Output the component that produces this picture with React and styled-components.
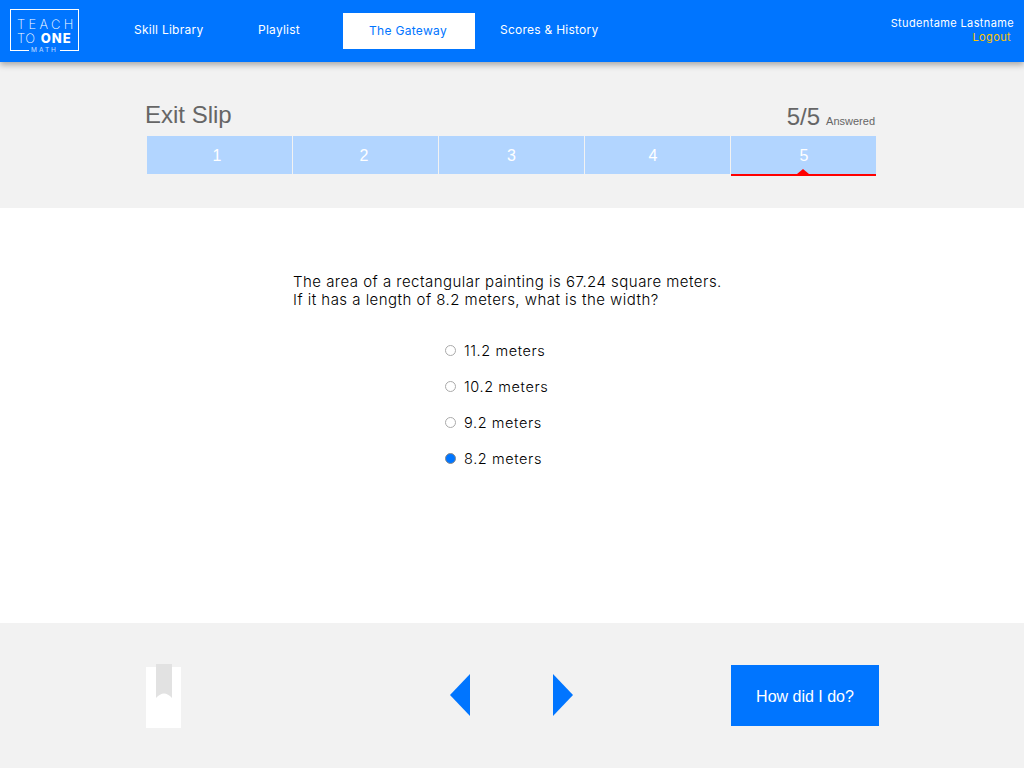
import React from 'react'
import styled, { createGlobalStyle } from 'styled-components'

const questions = [
  { label: '1', nudge: 5 },
  { label: '2', nudge: 3 },
  { label: '3', nudge: 0 },
  { label: '4', nudge: 9 },
  { label: '5', nudge: 0, active: true },
]

const answers = [
  { label: '11.2 meters' },
  { label: '10.2 meters' },
  { label: '9.2 meters' },
  { label: '8.2 meters', selected: true },
]

function App() {
  return (
    <Page>
      <GlobalStyle />
      <Header>
        <Logo>
          <LogoLine>TEACH</LogoLine>
          <LogoRow>
            <span>TO</span>
            <LogoBold>ONE</LogoBold>
          </LogoRow>
          <LogoMath>MATH</LogoMath>
        </Logo>
        <Nav>
          <NavItem $width={124}>Skill Library</NavItem>
          <NavItem $width={85}>Playlist</NavItem>
          <NavItem $width={132} $active>The Gateway</NavItem>
          <NavItem $width={148}>Scores &amp; History</NavItem>
        </Nav>
        <User>
          <UserName>Studentame Lastname</UserName>
          <Logout>Logout</Logout>
        </User>
      </Header>

      <SlipBar>
        <SlipHead>
          <SlipTitle>Exit Slip</SlipTitle>
          <Progress>
            <ProgressCount>5/5</ProgressCount>
            <ProgressLabel>Answered</ProgressLabel>
          </Progress>
        </SlipHead>
        <Tabs>
          {questions.map((q) => (
            <Tab key={q.label} $active={q.active} $nudge={q.nudge}>
              {q.label}
            </Tab>
          ))}
        </Tabs>
      </SlipBar>

      <Main>
        <Question>
          The area of a rectangular painting is 67.24 square meters.
          <br />
          If it has a length of 8.2 meters, what is the width?
        </Question>
        <Answers>
          {answers.map((a) => (
            <Answer key={a.label}>
              <Radio $selected={a.selected} />
              {a.label}
            </Answer>
          ))}
        </Answers>
      </Main>

      <Footer>
        <Bookmark />
        <Arrows>
          <svg width="20" height="42" viewBox="0 0 20 42">
            <polygon points="20,0 0,21 20,42" fill="#0075ff" />
          </svg>
          <svg width="20" height="42" viewBox="0 0 20 42">
            <polygon points="0,0 20,21 0,42" fill="#0075ff" />
          </svg>
        </Arrows>
        <DoneButton>How did I do?</DoneButton>
      </Footer>
    </Page>
  )
}

const GlobalStyle = createGlobalStyle`
  html, body {
    margin: 0;
    padding: 0;
    background: #f2f2f2;
  }
`

const Page = styled.div`
  width: 1024px;
  height: 768px;
  overflow: hidden;
  display: flex;
  flex-direction: column;
  font-family: "Liberation Sans", Arial, sans-serif;
`

const Header = styled.header`
  height: 62px;
  flex-shrink: 0;
  display: flex;
  align-items: center;
  padding: 0 10px;
  background-color: #0075ff;
  color: #fff;
  box-shadow: 0 3px 6px rgba(0, 0, 0, 0.3);
  position: relative;
  font-family: "Inter", sans-serif;
`

const Logo = styled.div`
  width: 69px;
  height: 42px;
  box-sizing: border-box;
  border: 1px solid #fff;
  border-bottom: none;
  padding: 7px 0 0 6px;
  margin-top: -2px;
  position: relative;
  flex-shrink: 0;

  &::before,
  &::after {
    content: "";
    position: absolute;
    bottom: 0;
    width: 18px;
    height: 1px;
    background: #fff;
  }
  &::before { left: 0; }
  &::after { right: 0; }
`

const LogoLine = styled.div`
  font-size: 13px;
  font-weight: 200;
  line-height: 14px;
  letter-spacing: 3.3px;
`

const LogoRow = styled.div`
  display: flex;
  gap: 5px;
  font-size: 13px;
  font-weight: 200;
  line-height: 14px;
  letter-spacing: 0.6px;
`

const LogoBold = styled.span`
  font-weight: 800;
  letter-spacing: 1px;
`

const LogoMath = styled.div`
  position: absolute;
  left: 0;
  right: 0;
  bottom: -3px;
  text-align: center;
  font-size: 6.5px;
  line-height: 7px;
  letter-spacing: 2px;
  opacity: 0.75;
`

const Nav = styled.nav`
  display: flex;
  align-items: center;
  margin-left: 55px;
`

const NavItem = styled.a`
  width: ${(p) => p.$width}px;
  height: 36px;
  box-sizing: border-box;
  display: flex;
  align-items: center;
  justify-content: ${(p) => (p.$active ? 'center' : 'flex-start')};
  padding-bottom: ${(p) => (p.$active ? '2px' : '4px')};
  padding-right: ${(p) => (p.$active ? '2px' : '0')};
  font-size: 12px;
  letter-spacing: ${(p) => (p.$active ? '0.32px' : '0.25px')};
  background-color: ${(p) => (p.$active ? '#fff' : 'transparent')};
  color: ${(p) => (p.$active ? '#0075ff' : '#fff')};
  margin-right: ${(p) => (p.$active ? '25px' : '0')};
`

const User = styled.div`
  margin-left: auto;
  text-align: right;
  font-size: 11px;
  line-height: 14px;
  letter-spacing: 0.37px;
  margin-top: -2px;
`

const UserName = styled.div``

const Logout = styled.div`
  color: #ffc400;
  margin-right: 3px;
`

const SlipBar = styled.section`
  height: 146px;
  flex-shrink: 0;
  box-sizing: border-box;
  padding: 37px 148px 0 145px;
  background: #f2f2f2;
`

const SlipHead = styled.div`
  height: 37px;
  display: flex;
  justify-content: space-between;
  align-items: flex-start;
  color: #666;
`

const SlipTitle = styled.h1`
  margin: 0;
  font-size: 24px;
  font-weight: 400;
  line-height: 32px;
`

const Progress = styled.div`
  display: flex;
  align-items: baseline;
  gap: 6px;
  line-height: 36px;
  margin-right: 1px;
`

const ProgressCount = styled.span`
  font-size: 24px;
`

const ProgressLabel = styled.span`
  font-size: 11px;
`

const Tabs = styled.div`
  display: flex;
  gap: 1px;
  margin-left: 2px;
`

const Tab = styled.div`
  width: 145px;
  height: 38px;
  flex-shrink: 0;
  display: flex;
  align-items: center;
  justify-content: center;
  box-sizing: border-box;
  padding-top: 2px;
  padding-right: ${(p) => p.$nudge}px;
  padding-left: ${(p) => (p.$active ? '1px' : '0')};
  background-color: #b2d5ff;
  color: #fff;
  font-size: 16px;
  position: relative;

  ${(p) =>
    p.$active &&
    `
    &::before {
      content: "";
      position: absolute;
      left: 0;
      right: 0;
      bottom: -2px;
      height: 2px;
      background: #f00;
    }
    &::after {
      content: "";
      position: absolute;
      left: 66px;
      bottom: 0;
      border-left: 6px solid transparent;
      border-right: 6px solid transparent;
      border-bottom: 5px solid #f00;
    }
  `}
`

const Main = styled.main`
  height: 415px;
  flex-shrink: 0;
  box-sizing: border-box;
  padding: 65px 0 0 293px;
  background: #fff;
  font-family: "Inter", sans-serif;
  font-weight: 300;
  color: #000;
`

const Question = styled.p`
  margin: 0;
  font-size: 15px;
  line-height: 18px;
  letter-spacing: 0.47px;
`

const Answers = styled.div`
  display: flex;
  flex-direction: column;
  margin: 23px 0 0 152px;
`

const Answer = styled.label`
  height: 36px;
  display: flex;
  align-items: center;
  gap: 8px;
  font-size: 14.5px;
  letter-spacing: 0.6px;
`

const Radio = styled.span`
  width: 11px;
  height: 11px;
  margin-top: 1px;
  box-sizing: border-box;
  border-radius: 50%;
  border: 1px solid ${(p) => (p.$selected ? '#8a8a8a' : '#aaa')};
  background-color: ${(p) => (p.$selected ? '#0075ff' : '#fff')};
`

const Footer = styled.footer`
  flex: 1;
  display: flex;
  align-items: flex-start;
  padding: 42px 145px 0 146px;
  background: #f2f2f2;
`

const Bookmark = styled.div`
  width: 35px;
  height: 61px;
  margin-top: 2px;
  background: #fff;
  position: relative;

  &::before {
    content: "";
    position: absolute;
    left: 10px;
    top: -3px;
    width: 16px;
    height: 34px;
    background: #e2e2e2;
    clip-path: path("M0 0 H16 V34 Q8 25 0 34 Z");
  }
`

const Arrows = styled.div`
  display: flex;
  gap: 83px;
  margin: 9px 0 0 269px;
`

const DoneButton = styled.button`
  width: 148px;
  height: 61px;
  margin-left: auto;
  padding: 3px 0 0;
  border: none;
  background-color: #0075ff;
  color: #fff;
  font-family: "Liberation Sans", Arial, sans-serif;
  font-size: 16px;
`

export default App
